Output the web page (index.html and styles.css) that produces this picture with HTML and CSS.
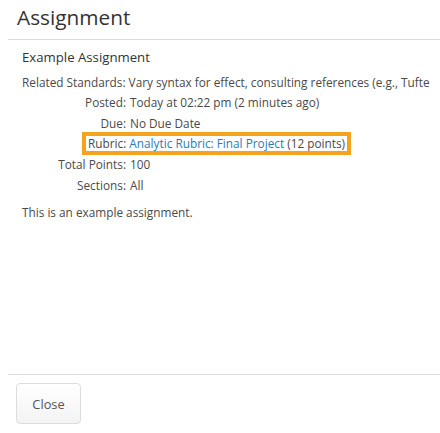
FILE: index.html
```html
<!DOCTYPE html>
<html lang="en">
<head>
    <meta charset="UTF-8">
    <meta name="viewport" content="width=device-width, initial-scale=1.0">
    <link rel="stylesheet" href="styles.css">
    <title>Assignment</title>
</head>
<body>
    <div class="modal">
        <div class="modal-header">
            <h1>Assignment</h1>
        </div>
        <div class="modal-body">
            <h2>Example Assignment</h2>
            <p class="standards">Related Standards: Vary syntax for effect, consulting references (e.g., Tufte</p>
            <div class="fila">
                <span class="etiqueta">Posted:</span>
                <span class="valor">Today at 02:22 pm (2 minutes ago)</span>
            </div>
            <div class="fila">
                <span class="etiqueta">Due:</span>
                <span class="valor">No Due Date</span>
            </div>
            <div class="fila rubrica">
                <span class="resaltado">Rubric: <a href="#">Analytic Rubric: Final Project</a> (12 points)</span>
            </div>
            <div class="fila">
                <span class="etiqueta">Total Points:</span>
                <span class="valor">100</span>
            </div>
            <div class="fila">
                <span class="etiqueta">Sections:</span>
                <span class="valor">All</span>
            </div>
            <p class="descripcion">This is an example assignment.</p>
        </div>
        <div class="modal-footer">
            <button class="btn">Close</button>
        </div>
    </div>
</body>
</html>
```

FILE: styles.css
```css
* {
    margin: 0;
    padding: 0;
    box-sizing: border-box;
}
body {
    background-color: #fff;
    font-family: "Open Sans", "Liberation Sans", sans-serif;
    color: #4a4a4a;
    overflow: hidden;
}
.modal {
    margin-left: 8px;
    width: 432px;
    height: 433px;
    display: flex;
    flex-direction: column;
}
.modal-header {
    height: 40px;
    padding: 2px 9px 0;
    border-bottom: 1px solid #dcdcdc;
}
h1 {
    font-size: 20.8px;
    font-weight: 400;
    line-height: 30px;
    color: #333;
}
.modal-body {
    flex: 1;
    padding: 7px 14px 0;
    font-size: 11.8px;
    white-space: nowrap;
}
h2 {
    font-size: 13.2px;
    font-weight: 400;
    line-height: 20px;
    color: #333;
    margin-bottom: 5px;
}
.standards {
    line-height: 20px;
}
.fila {
    display: flex;
    line-height: 20.5px;
}
.etiqueta {
    width: 104px;
    text-align: right;
    margin-right: 4px;
}
.rubrica {
    padding-left: 64px;
}
.resaltado {
    outline: 4px solid #f5a31f;
    padding: 0 2px;
    line-height: 15px;
    margin: 3px 0;
}
a {
    color: #2a7ab8;
    text-decoration: none;
}
.descripcion {
    margin-top: 7px;
    line-height: 20px;
}
.modal-footer {
    height: 59px;
    border-top: 1px solid #dcdcdc;
    padding: 8px 8px 0;
}
.btn {
    width: 65px;
    height: 41px;
    font-family: "Open Sans", "Liberation Sans", sans-serif;
    font-size: 12.8px;
    color: #555;
    background: linear-gradient(#fff, #f3f3f3);
    border: 1px solid #ddd;
    border-radius: 4px;
}
```
